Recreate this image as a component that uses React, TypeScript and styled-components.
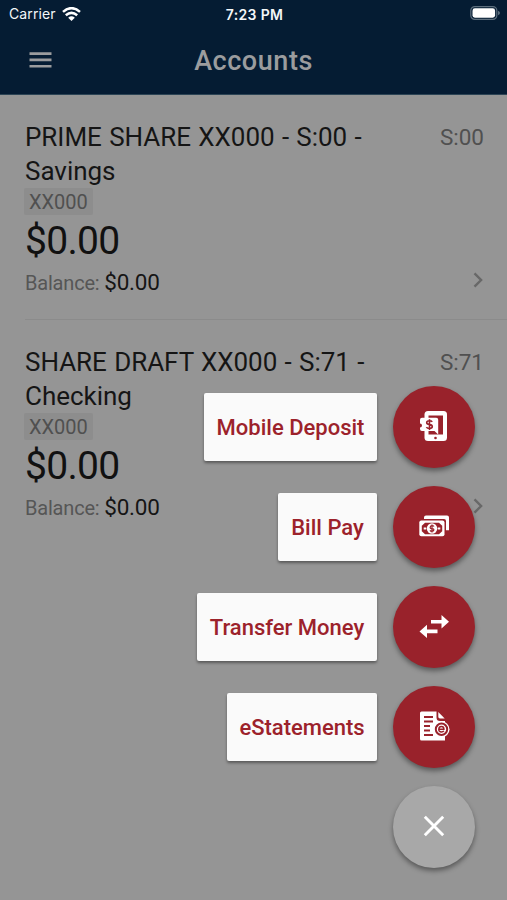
import React from "react";
import styled, { createGlobalStyle } from "styled-components";

const GlobalStyle = createGlobalStyle`
  * { box-sizing: border-box; }
  html, body { margin: 0; padding: 0; background: #959595; }
  body { font-family: Roboto, "Liberation Sans", sans-serif; overflow: hidden; }
`;

const Screen = styled.div`
  position: relative;
  width: 507px;
  height: 900px;
  overflow: hidden;
  background: #959595;
`;

const Header = styled.header`
  height: 95px;
  background: #051c33;
  border-bottom: 1px solid #2c4455;
`;

const StatusBar = styled.div`
  display: grid;
  grid-template-columns: 1fr auto 1fr;
  align-items: center;
  height: 28px;
  padding: 0 7px 0 9px;
  color: #f4f7f9;
  font-family: Inter, sans-serif;
  font-size: 14px;
`;

const Carrier = styled.div`
  display: flex;
  align-items: center;
  gap: 6px;
  letter-spacing: 0.1px;
  line-height: 26px;
`;

const Clock = styled.div`
  font-size: 14px;
  font-weight: 600;
  letter-spacing: 0.35px;
`;

const BatterySlot = styled.div`
  display: flex;
  justify-content: flex-end;
  padding-bottom: 2px;
`;

const TitleBar = styled.div`
  display: grid;
  grid-template-columns: 81px 1fr 81px;
  align-items: center;
  height: 66px;
`;

const MenuButton = styled.button`
  display: flex;
  width: 24px;
  margin: -3px 0 0 29px;
  padding: 0;
  border: 0;
  background: none;
`;

const Title = styled.h1`
  margin: 0;
  text-align: center;
  color: #9b9c9e;
  font-size: 27px;
  font-weight: 500;
  line-height: 34px;
  letter-spacing: 0.55px;
`;

const Account = styled.section`
  display: grid;
  grid-template-columns: 1fr auto;
  height: 225px;
  margin-left: 25px;
  padding: 25px 24px 0 0;
  border-bottom: 1px solid #8b8b8b;

  &:last-child { border-bottom: 0; }
`;

const Details = styled.div`
  display: flex;
  flex-direction: column;
  align-items: flex-start;
`;

const Name = styled.h2`
  width: 350px;
  margin: 0;
  color: #151515;
  font-size: 26px;
  font-weight: 400;
  line-height: 34px;
  letter-spacing: -0.03px;
  word-spacing: 0.9px;
`;

const Chip = styled.span`
  height: 27px;
  margin-left: -1px;
  padding: 0 5px;
  border-radius: 2px;
  background: #8d8d8d;
  color: #505050;
  font-size: 20px;
  line-height: 28px;
`;

const Amount = styled.div`
  margin-top: 2px;
  color: #111;
  font-size: 39px;
  line-height: 49px;
  letter-spacing: -0.7px;
`;

const Balance = styled.div`
  margin-top: 1px;
  color: #565656;
  font-size: 20px;
  line-height: 30px;
  letter-spacing: -0.2px;
`;

const BalanceValue = styled.span`
  color: #151515;
  font-size: 22.5px;
`;

const Side = styled.div`
  display: flex;
  flex-direction: column;
  align-items: flex-end;
  justify-content: space-between;
  margin-right: -1px;
  padding-bottom: 31px;
  color: #505050;
  font-size: 22.5px;
  line-height: 35px;
`;

const Actions = styled.nav`
  position: absolute;
  right: 32px;
  top: 386px;
  display: flex;
  flex-direction: column;
  gap: 18.1px;
`;

const Action = styled.div`
  display: flex;
  align-items: center;
  justify-content: flex-end;
  gap: 16px;
  height: 82px;
`;

const ActionLabel = styled.span<{ $width: number }>`
  width: ${(p) => p.$width}px;
  height: 68px;
  border-radius: 2px;
  background: #fafafa;
  box-shadow: 0 2px 3px rgba(0, 0, 0, 0.4);
  color: #9c222b;
  font-size: 22px;
  font-weight: 500;
  line-height: 69px;
  text-align: center;
  white-space: nowrap;
`;

const Fab = styled.button<{ $muted?: boolean }>`
  display: flex;
  align-items: center;
  justify-content: center;
  width: 82px;
  height: 82px;
  padding: 0 0 3px;
  border: 0;
  border-radius: 50%;
  background: ${(p) => (p.$muted ? "#a8a8a8" : "#99222b")};
  box-shadow: 0 3px 5px rgba(0, 0, 0, 0.4);
`;

const Icon = styled.svg`
  display: block;
  flex: none;
`;

const WifiIcon = () => (
  <Icon width="19" height="15" viewBox="0 0 19 15" fill="none" stroke="#fff" strokeWidth="2.5">
    <path d="M1 4.9Q9.5-2.6 18 4.9M3.8 8.3Q9.5 3.4 15.2 8.3" />
    <path d="M6.2 10.7Q9.5 7.8 12.8 10.7L9.5 14Z" fill="#fff" stroke="none" />
  </Icon>
);

const BatteryIcon = () => (
  <Icon width="30" height="14" viewBox="0 0 30 14">
    <rect x=".8" y=".6" width="26" height="12.8" rx="4" fill="none" stroke="#5d6f7e" strokeWidth="1.2" />
    <rect x="2.5" y="2.3" width="22.6" height="9.4" rx="2.4" fill="#fff" />
    <path d="M28 4.8Q30 5.5 30 7T28 9.2Z" fill="#5d6f7e" />
  </Icon>
);

const MenuIcon = () => (
  <Icon width="23" height="16" viewBox="0 0 23 16" fill="#9b9c9e">
    <path d="M.5.3h22v2.6H.5zM.5 6.6h22v2.6H.5zM.5 12.9h22v2.6H.5z" />
  </Icon>
);

const ChevronIcon = () => (
  <Icon width="12" height="16" viewBox="0 0 12 16" fill="none" stroke="#686868" strokeWidth="2.4">
    <path d="M2.5 1.4 9.1 8 2.5 14.6" />
  </Icon>
);

const DepositIcon = () => (
  <Icon width="32" height="32" viewBox="0 0 32 32">
    <rect x="6.5" y="1" width="22.5" height="30" rx="3.5" fill="#fff" />
    <path d="M10.5 5.5h14.5v19H10.5z" fill="#99222b" />
    <path d="M4 7.8h14.2a2 2 0 0 1 2 2V24.5L16.5 21H4a2 2 0 0 1-2-2v-1.5a2 2 0 0 0 0-4V9.8a2 2 0 0 1 2-2Z" fill="#fff" />
    <circle cx="17.5" cy="28" r="1.3" fill="#99222b" />
    <path d="M14.2 11.9Q13.5 10.8 11.4 10.8 8.7 10.8 8.7 12.6T11.5 14.6 14.3 16.6 11.5 18.5Q9.2 18.5 8.4 17.2M11.5 9.2V20" fill="none" stroke="#99222b" strokeWidth="1.6" />
  </Icon>
);

const CashIcon = () => (
  <Icon width="32" height="24" viewBox="0 0 32 24">
    <path d="M8 1.5h21a2 2 0 0 1 2 2v12.7h-3V7a2 2 0 0 0-2-2H6V3.5a2 2 0 0 1 2-2Z" fill="#fff" />
    <rect x="1.3" y="6.6" width="25.2" height="15.7" rx="2" fill="#fff" />
    <path d="M7 8.8h14l3.2 3v5.4l-3.2 3H7l-3.2-3v-5.4Z" fill="#99222b" />
    <circle cx="14" cy="14.5" r="5.2" fill="#fff" />
    <path d="M5.7 14.5h2.6m11.4 0h2.6" stroke="#fff" strokeWidth="2" />
    <path d="M16 12.5Q15.5 11.7 14 11.7T12.2 13.1 14 14.6 15.8 16 14 17.3 12 16.4M14 10.5v8" fill="none" stroke="#99222b" strokeWidth="1.2" />
  </Icon>
);

const TransferIcon = () => (
  <Icon width="32" height="26" viewBox="0 0 32 26" fill="#fff">
    <path d="M13 6.9h10.5V2L31 8.7l-7.5 6.7v-4.9H13zM19.5 16.6H9v-4.9L1.5 18.4 9 25.1v-4.9h10.5z" />
  </Icon>
);

const StatementIcon = () => (
  <Icon width="32" height="32" viewBox="0 0 32 32">
    <path d="M3.5 1.5h15v6a3.5 3.5 0 0 0 3.5 3.5H27v19.5H3.5A1.5 1.5 0 0 1 2 29V3a1.5 1.5 0 0 1 1.5-1.5Z" fill="#fff" />
    <path d="M20.3 2 26.7 8.5H22a1.7 1.7 0 0 1-1.7-1.7Z" fill="#fff" />
    <path d="M6 7h9M6 11.5h9M6 16h6M6 20.5h6M6 25h9" stroke="#99222b" strokeWidth="1.8" />
    <circle cx="23.5" cy="19.3" r="8" fill="#fff" />
    <circle cx="23.5" cy="19.3" r="5.7" fill="none" stroke="#99222b" strokeWidth="2" />
    <path d="M20.8 19.3h5.1Q25.9 16.6 23.4 16.6T20.8 19.3 23.5 22Q25.1 22 25.9 20.9" fill="none" stroke="#99222b" strokeWidth="1.5" />
  </Icon>
);

const CloseIcon = () => (
  <Icon width="22" height="22" viewBox="0 0 22 22" fill="none" stroke="#fff" strokeWidth="2.9">
    <path d="m1.8 1.8 18.4 18.4M20.2 1.8 1.8 20.2" />
  </Icon>
);

const accounts = [
  { name: "PRIME SHARE XX000 - S:00 - Savings", suffix: "S:00" },
  { name: "SHARE DRAFT XX000 - S:71 - Checking", suffix: "S:71" },
];

const actions = [
  { label: "Mobile Deposit", width: 173, Glyph: DepositIcon },
  { label: "Bill Pay", width: 99, Glyph: CashIcon },
  { label: "Transfer Money", width: 180, Glyph: TransferIcon },
  { label: "eStatements", width: 150, Glyph: StatementIcon },
];

export default function App() {
  return (
    <Screen>
      <GlobalStyle />
      <Header>
        <StatusBar>
          <Carrier>Carrier <WifiIcon /></Carrier>
          <Clock>7:23 PM</Clock>
          <BatterySlot><BatteryIcon /></BatterySlot>
        </StatusBar>
        <TitleBar>
          <MenuButton aria-label="Menu"><MenuIcon /></MenuButton>
          <Title>Accounts</Title>
        </TitleBar>
      </Header>
      <main>
        {accounts.map((a) => (
          <Account key={a.suffix}>
            <Details>
              <Name>{a.name}</Name>
              <Chip>XX000</Chip>
              <Amount>$0.00</Amount>
              <Balance>Balance: <BalanceValue>$0.00</BalanceValue></Balance>
            </Details>
            <Side>
              <span>{a.suffix}</span>
              <ChevronIcon />
            </Side>
          </Account>
        ))}
      </main>
      <Actions>
        {actions.map(({ label, width, Glyph }) => (
          <Action key={label}>
            <ActionLabel $width={width}>{label}</ActionLabel>
            <Fab aria-label={label}><Glyph /></Fab>
          </Action>
        ))}
        <Action>
          <Fab $muted aria-label="Close"><CloseIcon /></Fab>
        </Action>
      </Actions>
    </Screen>
  );
}
